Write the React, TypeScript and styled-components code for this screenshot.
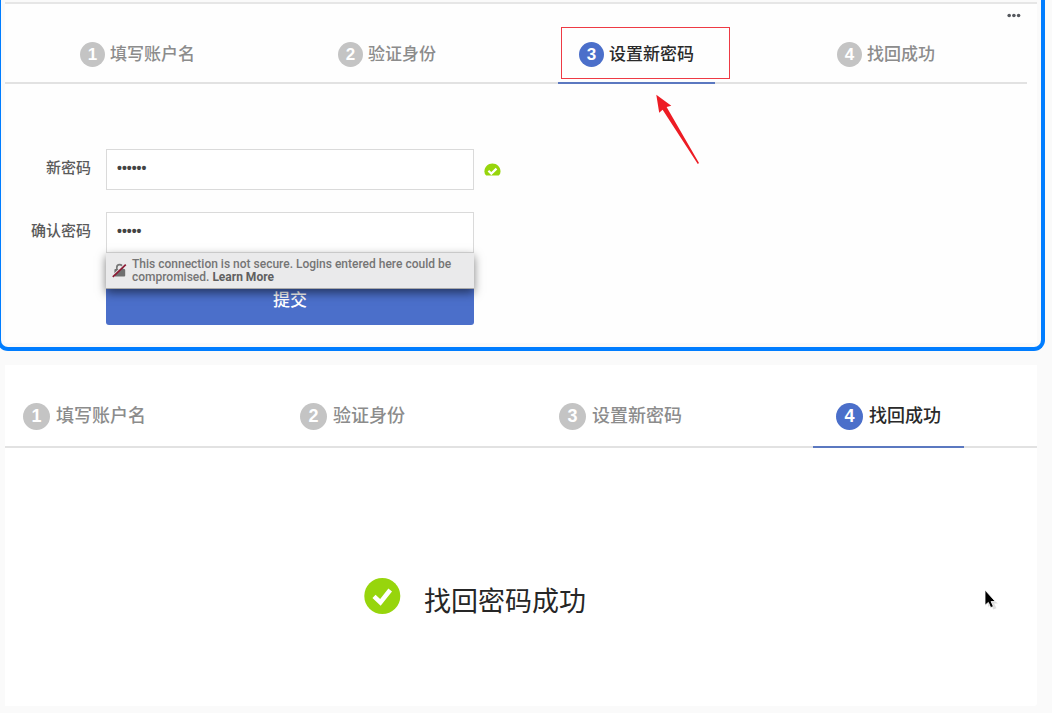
import React from "react";
import styled, { createGlobalStyle, css } from "styled-components";

const blue = "#4b6fca";
const green = "#97d50c";

const GlobalStyle = createGlobalStyle`
  *, *::before, *::after { box-sizing: border-box; }
  html { background: #fafafa; }
  body {
    margin: 0;
    overflow-x: hidden;
    font-family: "Liberation Sans", "Noto Sans CJK SC", sans-serif;
    color: #333;
  }
`;

const Page = styled.main`
  padding: 0 7px 7px 0;
  overflow: hidden;
`;

const SelectedFrame = styled.section`
  margin-left: -3px;
  padding: 0 4px 4px;
  border: 4px solid #007dff;
  border-top: 0;
  border-radius: 0 0 11px 11px;
`;

const Sheet = styled.div`
  position: relative;
  background: #fefefe;
  border-top: 2px solid #fafafa;
  padding-bottom: 18px;

  &::before {
    content: "";
    display: block;
    height: 2px;
    background: #e6e6e6;
  }
`;

const MoreButton = styled.button`
  position: absolute;
  top: 7px;
  right: 12px;
  display: flex;
  padding: 4px;
  border: 0;
  background: none;
`;

const StepList = styled.ol<{ $large?: boolean }>`
  display: flex;
  justify-content: space-between;
  margin: 0;
  list-style: none;
  border-bottom: 2px solid #e2e2e2;
  ${({ $large }) =>
    $large
      ? css`
          height: 83px;
          padding: 21px 73px 0 0;
        `
      : css`
          height: 80px;
          margin-right: 10px;
          padding: 23px 71px 0 54px;
        `}
`;

const StepItem = styled.li<{ $large?: boolean; $active?: boolean }>`
  position: relative;
  display: flex;
  align-items: center;
  gap: ${({ $large }) => ($large ? 6 : 5)}px;
  height: ${({ $large }) => ($large ? 62 : 57)}px;
  padding: 0 ${({ $large }) => ($large ? 23 : 21)}px;
  font-size: ${({ $large }) => ($large ? 18 : 17)}px;
  font-weight: 500;
  line-height: 24px;
  white-space: nowrap;
  color: ${({ $active }) => ($active ? "#2a2a2a" : "#8c8c8c")};
  border-bottom: 2px solid ${({ $active }) => ($active ? "#5b78c0" : "transparent")};

  ${({ $large }) =>
    $large &&
    css`
      &:first-child {
        padding-left: 18px;
      }
    `}
`;

const StepNumber = styled.span<{ $large?: boolean; $active?: boolean }>`
  display: flex;
  align-items: center;
  justify-content: center;
  width: ${({ $large }) => ($large ? 27 : 25)}px;
  height: ${({ $large }) => ($large ? 27 : 25)}px;
  border-radius: 50%;
  background: ${({ $active }) => ($active ? blue : "#c4c4c4")};
  color: #fff;
  font-weight: 700;
`;

const Highlight = styled.span`
  position: absolute;
  top: 0;
  left: 3px;
  right: -15px;
  height: 52px;
  border: 1px solid #ee3a44;
`;

const Arrow = styled.svg`
  position: absolute;
  top: 67px;
  left: 98px;
`;

const Form = styled.form`
  display: flex;
  flex-direction: column;
  gap: 22px;
  padding: 65px 24px 0 20px;
`;

const Field = styled.div`
  display: flex;
  align-items: center;
`;

const FieldLabel = styled.label`
  flex: 0 0 66px;
  margin-right: 15px;
  padding-bottom: 4px;
  text-align: right;
  font-size: 15px;
  font-weight: 500;
  line-height: 20px;
  white-space: nowrap;
  color: #5a5a5a;
`;

const Control = styled.div`
  position: relative;
  flex: 0 1 368px;
`;

const PasswordInput = styled.input`
  display: block;
  width: 100%;
  height: 41px;
  padding: 0 10px 4px;
  border: 1px solid #dadada;
  border-radius: 0;
  background: #fff;
  font: 700 14px "Liberation Sans", sans-serif;
  color: #444;
  outline: 0;
`;

const ValidIcon = styled.svg`
  margin-left: 10px;
`;

const Warning = styled.div`
  position: absolute;
  z-index: 1;
  top: 40px;
  left: 0;
  right: 0;
  display: flex;
  align-items: center;
  gap: 5px;
  height: 37px;
  padding: 0 6px;
  border-top: 1px solid #c9c9c9;
  border-bottom: 1px solid #aaa;
  background: #eaeaeb;
  box-shadow: 0 4px 9px rgba(0, 0, 0, 0.5);
  font-family: Roboto, sans-serif;
  font-size: 12px;
  font-weight: 500;
  line-height: 13px;
  color: #757575;

  svg {
    flex: none;
  }
  p {
    margin: 0;
  }
  a {
    color: #606060;
    font-weight: 700;
    text-decoration: none;
  }
`;

const Actions = styled.div`
  width: 100%;
  max-width: 449px;
  padding-left: 81px;
`;

const SubmitButton = styled.button`
  display: block;
  width: 100%;
  height: 50px;
  padding: 0 0 4px;
  border: 0;
  border-radius: 3px;
  background: ${blue};
  color: #fff;
  font: 500 17px "Noto Sans CJK SC", sans-serif;
`;

const ResultPanel = styled.section`
  position: relative;
  margin: 14px 8px 0 5px;
  background: #fff;
  border-radius: 0 0 3px 0;
`;

const Result = styled.div`
  display: flex;
  justify-content: center;
  align-items: flex-start;
  gap: 23px;
  padding: 130px 92px 80px 0;
`;

const ResultText = styled.p`
  margin: 0;
  font-size: 27px;
  line-height: 48px;
  color: #262626;
`;

const Pointer = styled.svg`
  position: absolute;
  right: 37px;
  bottom: 93px;
`;

const stepNames = ["填写账户名", "验证身份", "设置新密码", "找回成功"];

interface StepsProps {
  current: number;
  large?: boolean;
  children?: React.ReactNode;
}

function Steps({ current, large, children }: StepsProps) {
  return (
    <StepList $large={large}>
      {stepNames.map((name, i) => {
        const active = i + 1 === current;
        return (
          <StepItem key={name} $large={large} $active={active} aria-current={active ? "step" : undefined}>
            <StepNumber $large={large} $active={active}>{i + 1}</StepNumber>
            {name}
            {active && children}
          </StepItem>
        );
      })}
    </StepList>
  );
}

export default function App() {
  return (
    <>
      <GlobalStyle />
      <Page>
        <SelectedFrame>
          <Sheet>
            <MoreButton type="button" aria-label="更多">
              <svg width="14" height="5" viewBox="0 0 14 5" fill="#55585e">
                <circle cx="2.2" cy="2.5" r="1.8" />
                <circle cx="6.9" cy="2.5" r="1.8" />
                <circle cx="11.6" cy="2.5" r="1.8" />
              </svg>
            </MoreButton>
            <Steps current={3}>
              <Highlight />
              <Arrow width="44" height="71" viewBox="0 0 44 71" fill="#ed1c24" aria-hidden="true">
                <path d="M.3.7 15.3 11.7 10.6 13 43 69 41.8 70 6.6 15.7 3.2 18.7Z" />
              </Arrow>
            </Steps>
            <Form onSubmit={(e) => e.preventDefault()}>
              <Field>
                <FieldLabel htmlFor="new-password">新密码</FieldLabel>
                <Control>
                  <PasswordInput id="new-password" type="password" defaultValue="123456" />
                </Control>
                <ValidIcon width="17" height="13" viewBox="0 0 17 13" role="img" aria-label="有效">
                  <path d="M2.2 12.6Q.4 11.2.4 8.4C.4 3.8 4 .4 8.4.4s8.1 3.4 8.1 8q0 2.8-1.8 4.2Z" fill={green} />
                  <path d="m4.4 7.8 2.9 2.8 5.2-5" fill="none" stroke="#fff" strokeWidth="2.2" />
                </ValidIcon>
              </Field>
              <Field>
                <FieldLabel htmlFor="confirm-password">确认密码</FieldLabel>
                <Control>
                  <PasswordInput id="confirm-password" type="password" defaultValue="12345" />
                  <Warning role="alert">
                    <svg width="15" height="15" viewBox="0 0 15 15" aria-hidden="true">
                      <path d="M4.8 7V4.4a2.8 2.8 0 0 1 5.6 0V7" fill="none" stroke="#777" strokeWidth="1.7" />
                      <rect x="2.4" y="6" width="10.8" height="7.6" rx="1" fill="#707070" />
                      <path d="M.6 12.8 12.8 1" stroke="#eaeaeb" strokeWidth="1.4" />
                      <path d="M.8 13.8 13.8 1.6" stroke="#8c1a34" strokeWidth="1.7" />
                    </svg>
                    <p>
                      This connection is not secure. Logins entered here could be compromised.{" "}
                      <a href="#learn-more">Learn More</a>
                    </p>
                  </Warning>
                </Control>
              </Field>
              <Actions>
                <SubmitButton type="submit">提交</SubmitButton>
              </Actions>
            </Form>
          </Sheet>
        </SelectedFrame>

        <ResultPanel>
          <Steps current={4} large />
          <Result>
            <svg width="37" height="37" viewBox="0 0 37 37" aria-hidden="true">
              <circle cx="18.3" cy="18" r="18" fill={green} />
              <path d="m10 18.4 6.4 6 9.8-12.4" fill="none" stroke="#fff" strokeWidth="4.6" />
            </svg>
            <ResultText>找回密码成功</ResultText>
          </Result>
          <Pointer width="16" height="24" viewBox="0 0 16 24" aria-hidden="true">
            <path d="M4 6.5V18l2.8-2.4 2.5 5 3.2-1.4-2.3-4.6h3.8Z" fill="#000" opacity=".12" />
            <path d="M1 1v15.2l3.4-2.8 2.3 5.2 2.7-1.1-2.3-5h4.2Z" fill="#000" stroke="#fff" strokeWidth=".8" />
          </Pointer>
        </ResultPanel>
      </Page>
    </>
  );
}
